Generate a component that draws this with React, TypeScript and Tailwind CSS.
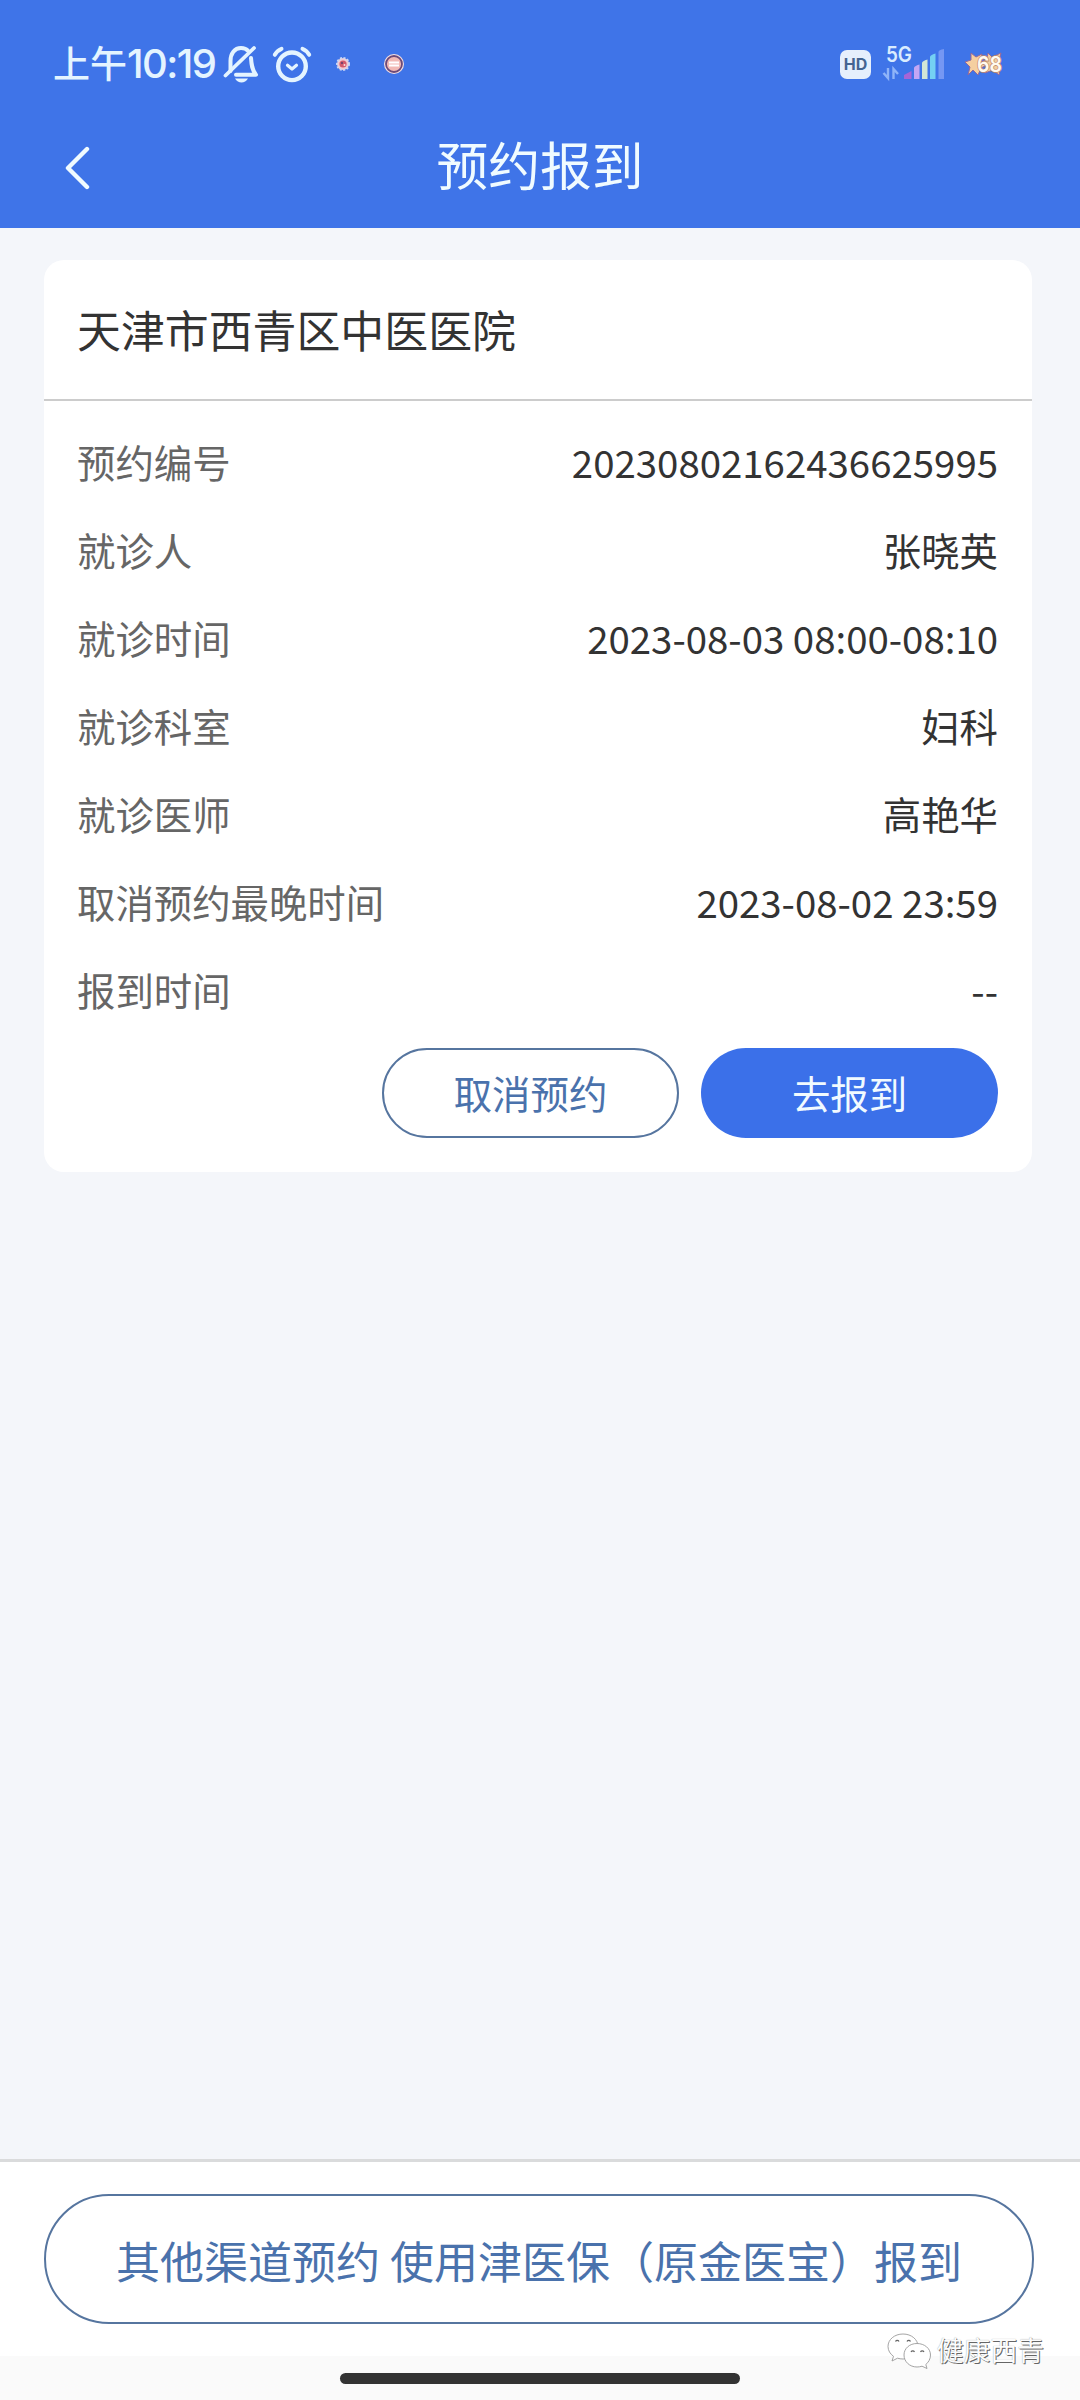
import { clsx } from "clsx";

const details = [
  { label: "预约编号", value: "20230802162436625995" },
  { label: "就诊人", value: "张晓英" },
  { label: "就诊时间", value: "2023-08-03 08:00-08:10" },
  { label: "就诊科室", value: "妇科" },
  { label: "就诊医师", value: "高艳华" },
  { label: "取消预约最晚时间", value: "2023-08-02 23:59" },
  { label: "报到时间", value: "--" },
];

const BellOffIcon = () => (
  <svg width="36" height="40" viewBox="0 0 36 40" fill="none" className="shrink-0">
    <path
      d="M7.5 27V17C7.5 9.5 11.5 4 18 4C21 4 23.500 5 25.200 7M28 14C28.500 21 29 26 33 30.800H13"
      stroke="#e4f4ff"
      strokeWidth="4"
      strokeLinejoin="round"
      strokeLinecap="round"
    />
    <path d="M2.500 31.500L31 4" stroke="#e4f4ff" strokeWidth="3.800" strokeLinecap="round" />
    <path d="M12 34.500H25C23.500 37 21 38.500 18.500 38.500S13.500 37 12 34.500Z" fill="#e4f4ff" />
  </svg>
);

const AlarmIcon = () => (
  <svg width="40" height="40" viewBox="0 0 40 40" fill="none" className="shrink-0">
    <g stroke="#e4f4ff" strokeLinecap="round" strokeLinejoin="round">
      <circle cx="20" cy="22.300" r="13.800" strokeWidth="4.400" />
      <path d="M15.500 21.200L20 25L24.500 21.200" strokeWidth="3.200" />
      <path d="M2.800 10.800C4.300 8 6.500 6 9.500 4.800" strokeWidth="4" />
      <path d="M37.200 10.800C35.700 8 33.500 6 30.500 4.800" strokeWidth="4" />
    </g>
  </svg>
);

const SignalIcon = () => (
  <svg width="64" height="48" viewBox="0 -6 64 48" className="shrink-0">
    <text
      x="4"
      y="16"
      fontSize="21"
      fontWeight="600"
      fill="#d9ecff"
      textLength="26"
      lengthAdjust="spacingAndGlyphs"
      fontFamily="Inter, sans-serif"
    >
      5G
    </text>
    <g stroke="#8fb4f8" strokeWidth="2.400" fill="none">
      <path d="M6 22V32L1.500 27" />
      <path d="M11.500 33V23L16 28" />
    </g>
    <path d="M22 33V29L29.500 25V33Z" fill="#a765d6" />
    <path d="M32 33V22Q32 20 37.500 18.500V33Z" fill="#c3a6f4" />
    <path d="M40 33V17Q40 15 45.500 13.500V33Z" fill="#d3e6d6" />
    <path d="M48 33V11Q48 9 53.500 7.500V33Z" fill="#74d0f3" />
    <path d="M56.500 33V6Q56.500 4 62 3V33Z" fill="#7597f3" />
  </svg>
);

const BatteryIcon = () => (
  <svg width="42" height="40" viewBox="0 -6 42 40" className="shrink-0">
    <g stroke="#94689a" strokeWidth="1" strokeLinejoin="round">
      <path d="M7 3L12 7L18 4L17 11L23 15L17 18L14 25L9 20L4 25L6 17L1 12L7 10Z" fill="#f5cfa0" />
      <path d="M24 3L28 7L37 3L35 11L37 16L35 25L29 20L21 23L22 16L17 12L23 9Z" fill="#f3cf9f" />
    </g>
    <text
      x="13"
      y="22"
      fontSize="22"
      fontWeight="600"
      fill="#fffaf0"
      stroke="#c08a6c"
      strokeWidth="1.600"
      paintOrder="stroke"
      textLength="25"
      lengthAdjust="spacingAndGlyphs"
      fontFamily="Inter, sans-serif"
    >
      68
    </text>
  </svg>
);

const WechatIcon = () => (
  <svg width="46" height="38" viewBox="0 0 46 38" className="shrink-0">
    <g fill="#fff" stroke="#9a9a9a" strokeWidth="0.900" strokeLinejoin="round">
      <path d="M17 2C8.500 2 2 7.500 2 14.500C2 18.500 4.200 22 7.500 24.300L6 29L11.500 26.200C13.300 26.700 15 27 17 27C25.500 27 32 21.500 32 14.500S25.500 2 17 2Z" />
      <path d="M31 11.500C23.500 11.500 18 16.500 18 23S23.500 35 31 35C32.800 35 34.500 34.700 36 34.200L41 36.500L39.800 32.500C42.500 30.300 44.500 27 44.500 23C44.500 16.500 38.500 11.500 31 11.500Z" />
    </g>
    <g fill="none" stroke="#666" strokeWidth="1.200">
      <path d="M9.500 9.500A2 2 0 0 1 13 9.500M21 9.500A2 2 0 0 1 24.500 9.500M25 20A2 2 0 0 1 28.500 20M34.500 20A2 2 0 0 1 38 20" />
    </g>
  </svg>
);

const StatusBar = () => (
  <div className="flex h-32 items-center justify-between pl-[53px] pr-[74px]">
    <div className="flex items-center">
      <div className="flex w-[170px] items-center whitespace-nowrap text-[#e4f4ff]">
        <span className="pb-1 text-[37px] leading-none font-medium">上午</span>
        <span className="font-[Inter,sans-serif] text-[40px] leading-none font-medium tracking-[-1.6px]">
          10:19
        </span>
      </div>
      <BellOffIcon />
      <div className="ml-[13px] flex">
        <AlarmIcon />
      </div>
      <svg width="16" height="16" viewBox="0 0 16 16" className="ml-[23px] shrink-0">
        <circle cx="8" cy="8" r="6" fill="#f3c9cf" stroke="#c9d6f6" strokeWidth="2" strokeDasharray="2 1.500" />
        <circle cx="8" cy="8" r="3.600" fill="#d2596c" />
        <circle cx="7" cy="7" r="1" fill="#5c3c6c" />
        <circle cx="9.500" cy="9" r="1" fill="#f6dede" />
      </svg>
      <svg width="22" height="22" viewBox="0 0 22 22" className="ml-8 shrink-0">
        <circle cx="11" cy="11" r="10" fill="#f6dfe2" />
        <circle cx="11" cy="11" r="8" fill="#f2b9b4" stroke="#6c4a78" strokeWidth="1.800" />
        <path d="M6 9.500H16M6 12.500H16" stroke="#fff" strokeWidth="1.800" />
      </svg>
    </div>
    <div className="flex items-center">
      <div className="flex h-[29px] w-[31px] items-center justify-center rounded-[7px] bg-[#e6effc] font-[Inter,sans-serif] text-[16px] leading-none font-bold text-[#456491]">
        HD
      </div>
      <div className="ml-[11px] flex">
        <SignalIcon />
      </div>
      <div className="ml-[18px] flex">
        <BatteryIcon />
      </div>
    </div>
  </div>
);

const PillButton = ({ text, primary }: { text: string; primary?: boolean }) => (
  <button
    className={clsx(
      "flex h-[90px] w-[297px] cursor-pointer items-center justify-center rounded-full text-[38.400px]",
      primary
        ? "bg-[#3b70e9] text-[#f1faff]"
        : "border-2 border-[#56759f] bg-white text-[#4a72ac]"
    )}
  >
    {text}
  </button>
);

export default function App() {
  return (
    <div className="flex h-[2400px] w-[1080px] flex-col bg-[#f4f6fa] font-['Noto_Sans_CJK_SC',sans-serif]">
      <header className="h-[228px] shrink-0 bg-[#3f74e8]">
        <StatusBar />
        <div className="grid h-[76px] grid-cols-[1fr_auto_1fr] items-center">
          <svg width="28" height="44" viewBox="0 0 28 44" fill="none" className="mt-1 ml-[63px]">
            <path
              d="M24 3L5 22L24 41"
              stroke="#f0fbff"
              strokeWidth="4.400"
              strokeLinecap="round"
              strokeLinejoin="round"
            />
          </svg>
          <h1 className="pb-[5px] text-[51.800px] leading-none text-[#f0fbff]">预约报到</h1>
        </div>
      </header>

      <main className="flex-1 pt-8 pl-11">
        <section className="h-[912px] w-[988px] rounded-[20px] bg-white">
          <h2 className="flex h-[141px] items-center border-b-2 border-[#cccccc] pt-px pl-[33px] text-[43.900px] text-[#333]">
            天津市西青区中医医院
          </h2>
          <div className="pt-[17px] pr-[34px] pl-[33px]">
            {details.map((item) => (
              <div key={item.label} className="flex h-[88px] items-center justify-between text-[38.400px]">
                <span className="text-[#666]">{item.label}</span>
                <span className="text-[#333]">{item.value}</span>
              </div>
            ))}
            <div className="flex justify-end gap-[22px] pt-3.5">
              <PillButton text="取消预约" />
              <PillButton text="去报到" primary />
            </div>
          </div>
        </section>
      </main>

      <footer className="h-[197px] border-t-[3px] border-[#dadbdc] bg-white px-11 pt-8">
        <button className="flex h-[130px] w-[990px] cursor-pointer items-center justify-center rounded-full border-2 border-[#56759f] pt-0.5 text-[44px] whitespace-nowrap text-[#4a72ac]">
          其他渠道预约 使用津医保（原金医宝）报到
        </button>
      </footer>
      <div className="relative flex h-11 justify-center bg-[#fafafa] pt-[17px]">
        <div className="h-[11px] w-[400px] rounded-full bg-[#333]" />
        {/* watermark, overlaps the footer edge */}
        <div className="absolute right-9 bottom-[30px] flex items-center gap-[5px]">
          <WechatIcon />
          <span className="pb-0.5 text-[26.800px] leading-none text-[#fcfcfc] [text-shadow:1px_1px_0_#666,0_0_1px_#999]">
            健康西青
          </span>
        </div>
      </div>
    </div>
  );
}
